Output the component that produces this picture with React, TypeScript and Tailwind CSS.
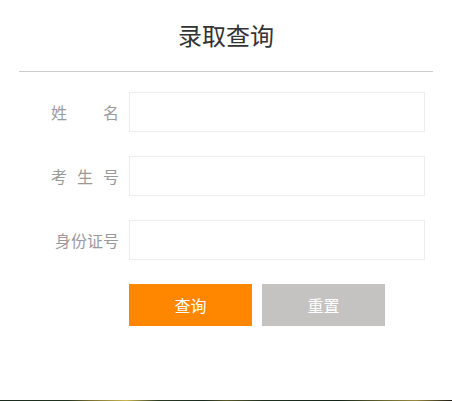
const FONT = '"Microsoft YaHei", "Noto Sans CJK SC", "Noto Sans", sans-serif';

function Label({ chars }: { chars: string[] }) {
  if (chars.length === 4) {
    return <div className="flex w-[64px] justify-between">{chars.map((c, i) => <span key={i}>{c}</span>)}</div>;
  }
  return (
    <div className="flex w-[68px] justify-between">
      {chars.map((c, i) => (
        <span key={i}>{c}</span>
      ))}
    </div>
  );
}

const fields = [
  { key: 'name', chars: ['姓', '名'] },
  { key: 'ksh', chars: ['考', '生', '号'] },
  { key: 'sfz', chars: ['身', '份', '证', '号'] },
];

export default function App() {
  return (
    <div className="flex h-[401px] w-full flex-col bg-white" style={{ fontFamily: FONT }}>
      <div className="flex-1">
        <div className="mx-[19px] flex h-[72px] items-center justify-center border-b border-[#cccccc] pb-[2px]">
          <h1 className="text-[24px] leading-none text-[#333333]">录取查询</h1>
        </div>

        <form className="mt-[20px] flex flex-col gap-[24px]" onSubmit={e => e.preventDefault()}>
          {fields.map(f => (
            <div key={f.key} className="flex items-center">
              <div className="flex w-[119px] justify-end text-[16px] leading-none text-[#9a9a9a]">
                <Label chars={f.chars} />
              </div>
              <input
                type="text"
                className="ml-[10px] h-[40px] w-[296px] border border-[#ececec] bg-white px-2 text-[14px] outline-none"
              />
            </div>
          ))}

          <div className="flex gap-[10px] pl-[129px]">
            <button type="submit" className="h-[42px] w-[123px] bg-[#ff8700] text-[16px] text-white">
              查询
            </button>
            <button type="reset" className="h-[42px] w-[123px] bg-[#c4c3c1] text-[16px] text-white">
              重置
            </button>
          </div>
        </form>
      </div>
      <div className="h-px w-full bg-[linear-gradient(90deg,#1b2a1e_0%,#22331f_15%,#7a7030_20%,#c9b850_28%,#2a3a22_35%,#1a2a20_45%,#5a5a28_50%,#203020_58%,#142418_75%,#6a6a30_85%,#9a8a40_92%,#1a1a14_100%)]" />
    </div>
  );
}
